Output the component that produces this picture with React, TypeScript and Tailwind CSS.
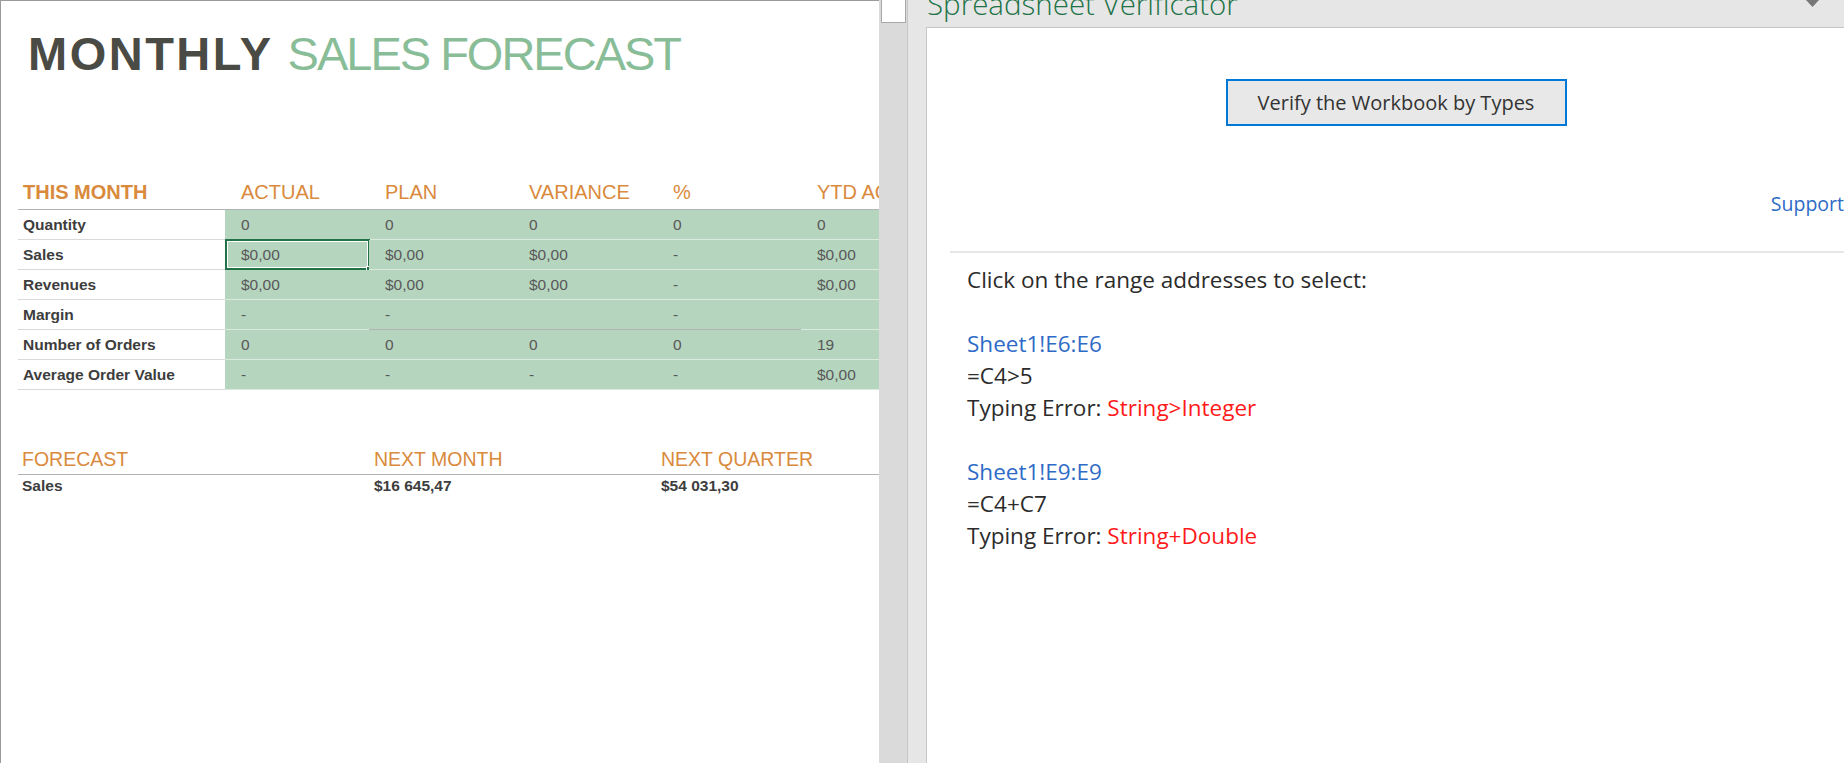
import React from 'react';

const rows = [
  { label: 'Quantity', cells: ['0', '0', '0', '0', '0'] },
  { label: 'Sales', cells: ['$0,00', '$0,00', '$0,00', '-', '$0,00'] },
  { label: 'Revenues', cells: ['$0,00', '$0,00', '$0,00', '-', '$0,00'] },
  { label: 'Margin', cells: ['-', '-', '', '-', ''] },
  { label: 'Number of Orders', cells: ['0', '0', '0', '0', '19'] },
  { label: 'Average Order Value', cells: ['-', '-', '-', '-', '$0,00'] },
];

const headers = ['ACTUAL', 'PLAN', 'VARIANCE', '%', 'YTD ACTUAL'];

function Sheet() {
  return (
    <div className="relative h-full w-[879px] shrink-0 overflow-hidden border-l border-t border-[#9b9b9b] bg-white font-['Liberation_Sans',Arial,sans-serif]">
      {/* selected column / row markers */}
      <div className="absolute left-[224px] top-[-1px] h-[1px] w-[146px] bg-[#217346]" />
      <div className="absolute left-[-1px] top-[238px] h-[31px] w-[1px] bg-[#217346]" />

      {/* Title */}
      <h1 className="ml-[27px] mt-[29px] whitespace-nowrap text-[47px] leading-[47px]">
        <span className="font-bold tracking-[2.5px] text-[#4b4b45]">MONTHLY</span>
        <span className="ml-[14px] tracking-[-2px] text-[#88bd98]">SALES FORECAST</span>
      </h1>

      {/* This month table */}
      <div className="ml-[17px] mt-[95px] w-[1000px]">
        <div className="flex h-[38px] items-end border-b border-[#b3b3b3] pb-[7px] text-[20px] leading-[20px] text-[#d98a3c]">
          <div className="w-[207px] pl-[5px] font-bold">THIS MONTH</div>
          {headers.map((h) => (
            <div key={h} className="w-[144px] whitespace-nowrap pl-[16px]">
              {h}
            </div>
          ))}
        </div>
        {rows.map((row, ri) => (
          <div key={row.label} className="flex h-[30px] text-[15.5px] leading-[16px]">
            <div className="flex w-[207px] items-center border-b border-[#d9d9d9] pl-[5px] pt-[1px] font-bold text-[#3d3d3d]">
              {row.label}
            </div>
            {row.cells.map((c, ci) => {
              const dark = ri === 3 && ci >= 1 && ci <= 3;
              return (
                <div
                  key={ci}
                  className={`relative flex w-[144px] items-center border-b bg-[#b6d5bf] pl-[16px] pt-[1px] text-[#585858] ${
                    dark ? 'border-[#b4b4b4]' : 'border-[#dbe9df]'
                  }`}
                >
                  {c}
                  {ri === 1 && ci === 0 && (
                    <>
                      <div className="absolute left-0 top-[-1px] h-[31px] w-[145px] border-2 border-[#217346]">
                        <div className="h-full w-full border border-white" />
                      </div>
                      <div className="absolute left-[141px] top-[26px] h-[7px] w-[7px] border border-white bg-[#217346]" />
                    </>
                  )}
                </div>
              );
            })}
          </div>
        ))}
      </div>

      {/* Forecast */}
      <div className="ml-[17px] mt-[50px] w-[1000px]">
        <div className="flex h-[35px] items-end border-b border-[#b3b3b3] pb-[5px] text-[19.5px] leading-[20px] text-[#d98a3c]">
          <div className="w-[352px] pl-[4px]">FORECAST</div>
          <div className="w-[287px] pl-[4px]">NEXT MONTH</div>
          <div className="pl-[4px]">NEXT QUARTER</div>
        </div>
        <div className="flex h-[22px] items-center text-[15.5px] font-bold leading-[16px] text-[#3d3d3d]">
          <div className="w-[352px] pl-[4px]">Sales</div>
          <div className="w-[287px] pl-[4px]">$16 645,47</div>
          <div className="pl-[4px]">$54 031,30</div>
        </div>
      </div>
    </div>
  );
}

function TaskPane() {
  return (
    <div className="flex h-full flex-1 flex-col bg-[#e6e6e6] pl-[18px] font-['Open_Sans',sans-serif]">
      <div className="relative h-[27px] shrink-0 overflow-hidden">
        <div className="mt-[-11px] whitespace-nowrap pl-[1px] text-[29.5px] font-light leading-[29px] text-[#217346]">
          Spreadsheet Verificator
        </div>
        <svg className="absolute right-[46px] top-0" width="14" height="8" viewBox="0 0 14 8">
          <polygon points="0,0 13,0 6.5,7" fill="#777777" />
        </svg>
      </div>
      <div className="flex-1 overflow-hidden border-l border-r border-t border-[#c6c6c6] bg-white">
        <div className="w-[938px]">
          <div className="mt-[51px] flex justify-center">
            <button className="h-[47px] w-[341px] border-2 border-[#0078d7] bg-[#e8e8e8] text-[20px] text-[#333333]">
              Verify the Workbook by Types
            </button>
          </div>
          <div className="mt-[65px] h-[26px] pr-[21px] text-right text-[19.5px] leading-[26px] text-[#2e6bc6]">
            Support
          </div>
          <div className="ml-[23px] mt-[34px] h-[2px] bg-[#e6e6e6]" />
          <div className="mt-[11px] pl-[40px] text-[22.5px] leading-[32px] text-[#2b2b2b]">
            <div>Click on the range addresses to select:</div>
            <div className="h-[32px]" />
            <div className="text-[#2e6bc6]">Sheet1!E6:E6</div>
            <div>=C4&gt;5</div>
            <div>
              Typing Error: <span className="text-[#ff1a1a]">String&gt;Integer</span>
            </div>
            <div className="h-[32px]" />
            <div className="text-[#2e6bc6]">Sheet1!E9:E9</div>
            <div>=C4+C7</div>
            <div>
              Typing Error: <span className="text-[#ff1a1a]">String+Double</span>
            </div>
          </div>
        </div>
      </div>
    </div>
  );
}

export default function App() {
  return (
    <div className="flex h-[763px] w-[1844px] overflow-hidden bg-white">
      <Sheet />
      {/* vertical scrollbar */}
      <div className="h-full w-[29px] shrink-0 border-r border-[#c6c6c6] bg-[#dadada]">
        <div className="ml-[2px] h-[23px] w-[25px] border border-t-0 border-[#a8a8a8] bg-white" />
      </div>
      <TaskPane />
    </div>
  );
}
